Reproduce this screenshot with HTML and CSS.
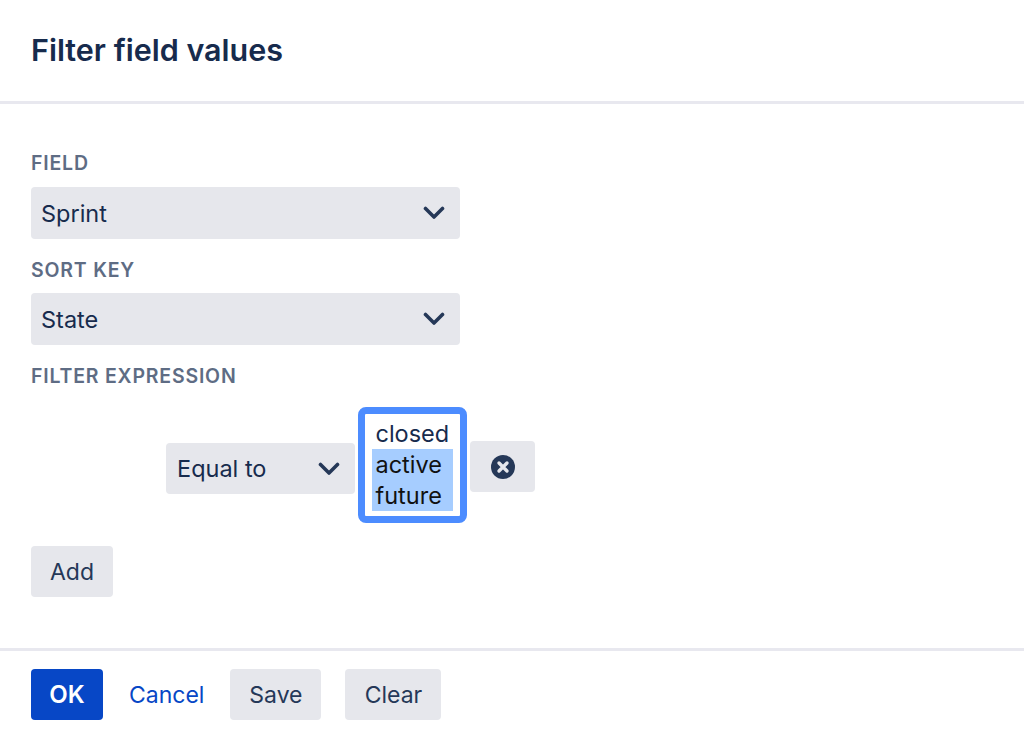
FILE: index.html
```html
<!DOCTYPE html>
<html lang="en">
<head>
  <meta charset="UTF-8">
  <title>Filter field values</title>
  <link rel="stylesheet" href="styles.css">
</head>
<body>

  <header class="dialog-header">
    <h1>Filter field values</h1>
  </header>

  <main class="dialog-body">
    <label class="field-label">FIELD</label>
    <div class="select select-wide">
      <span>Sprint</span>
      <svg class="chevron" viewBox="0 0 22 14"><path d="M2.5 2.5 L11 11 L19.5 2.5"/></svg>
    </div>

    <label class="field-label label-sort">SORT KEY</label>
    <div class="select select-wide">
      <span>State</span>
      <svg class="chevron" viewBox="0 0 22 14"><path d="M2.5 2.5 L11 11 L19.5 2.5"/></svg>
    </div>

    <label class="field-label label-filter">FILTER EXPRESSION</label>
    <div class="filter-row">
      <div class="select select-op">
        <span>Equal to</span>
        <svg class="chevron" viewBox="0 0 22 14"><path d="M2.5 2.5 L11 11 L19.5 2.5"/></svg>
      </div>
      <div class="listbox">
        <div class="option">closed</div>
        <div class="option selected">active</div>
        <div class="option selected">future</div>
      </div>
      <button class="btn btn-delete" aria-label="Remove">
        <svg viewBox="0 0 24 24" class="remove-icon">
          <circle cx="12" cy="12" r="12" fill="#253858"/>
          <path d="M8 8 L16 16 M16 8 L8 16" stroke="#e6e7ec" stroke-width="3.4" stroke-linecap="round"/>
        </svg>
      </button>
    </div>

    <button class="btn btn-add">Add</button>
  </main>

  <footer class="dialog-footer">
    <button class="btn btn-primary">OK</button>
    <a class="cancel" href="#">Cancel</a>
    <button class="btn btn-save">Save</button>
    <button class="btn btn-clear">Clear</button>
  </footer>

</body>
</html>
```

FILE: styles.css
```css
* {
  box-sizing: border-box;
}
html, body {
  height: 100%;
}
body {
  margin: 0;
  background: #fff;
  color: #172b4d;
  font-family: Inter, "Liberation Sans", sans-serif;
  overflow: hidden;
}
.dialog-header {
  height: 104px;
  padding: 31px 31px 0;
  border-bottom: 3px solid #e8e8ef;
}
h1 {
  margin: 0;
  font-size: 30.5px;
  line-height: 38px;
  font-weight: 600;
}
.dialog-body {
  height: 544px;
  padding: 47px 31px 0;
}
.field-label {
  display: block;
  height: 24px;
  margin-bottom: 12px;
  color: #5e6c84;
  font-size: 19.5px;
  line-height: 24px;
  font-weight: 600;
  letter-spacing: 0.8px;
}
.label-sort {
  margin-top: 19px;
  margin-bottom: 11px;
}
.label-filter {
  margin-top: 19px;
  margin-bottom: 0;
}
.select {
  display: flex;
  align-items: center;
  justify-content: space-between;
  height: 52px;
  padding: 0 15px 0 10px;
  background: #e6e7ec;
  border-radius: 4px;
  font-size: 23.5px;
}
.select-wide {
  width: 429px;
}
.chevron {
  width: 22px;
  height: 14px;
  fill: none;
  stroke: #253858;
  stroke-width: 3.6;
  stroke-linecap: round;
  stroke-linejoin: round;
}
.filter-row {
  display: flex;
  align-items: flex-start;
  height: 116px;
  margin-top: 19px;
  padding-left: 135px;
}
.select-op {
  width: 189px;
  height: 51px;
  margin-top: 36px;
  padding-left: 11px;
}
.listbox {
  width: 109px;
  height: 116px;
  margin-left: 3px;
  padding: 4px 7px;
  border: 7px solid #4c8cff;
  border-radius: 8px;
  background: #fff;
  font-size: 23.5px;
}
.option {
  height: 31px;
  padding-left: 3.5px;
  line-height: 31px;
}
.option.selected {
  background: #a6cdff;
  color: #111;
}
.btn {
  border: none;
  border-radius: 4px;
  height: 51px;
  background: #e6e7ec;
  color: #253858;
  font-family: inherit;
  font-size: 23px;
  font-weight: 400;
  padding: 0;
}
.btn-delete {
  display: flex;
  align-items: center;
  justify-content: center;
  width: 65px;
  margin-top: 34px;
  margin-left: 3px;
}
.remove-icon {
  width: 24px;
  height: 24px;
}
.btn-add {
  display: block;
  width: 82px;
  margin-top: 23px;
}
.dialog-footer {
  display: flex;
  align-items: flex-start;
  height: 88px;
  padding: 18px 31px 0;
  border-top: 3px solid #e8e8ef;
}
.btn-primary {
  width: 72px;
  background: #0747c6;
  color: #fff;
  font-size: 24px;
  font-weight: 600;
}
.cancel {
  margin-left: 26px;
  color: #0747c6;
  font-size: 23px;
  line-height: 53px;
  text-decoration: none;
}
.btn-save {
  width: 91px;
  margin-left: 26px;
}
.btn-clear {
  width: 96px;
  margin-left: 24px;
}
```
